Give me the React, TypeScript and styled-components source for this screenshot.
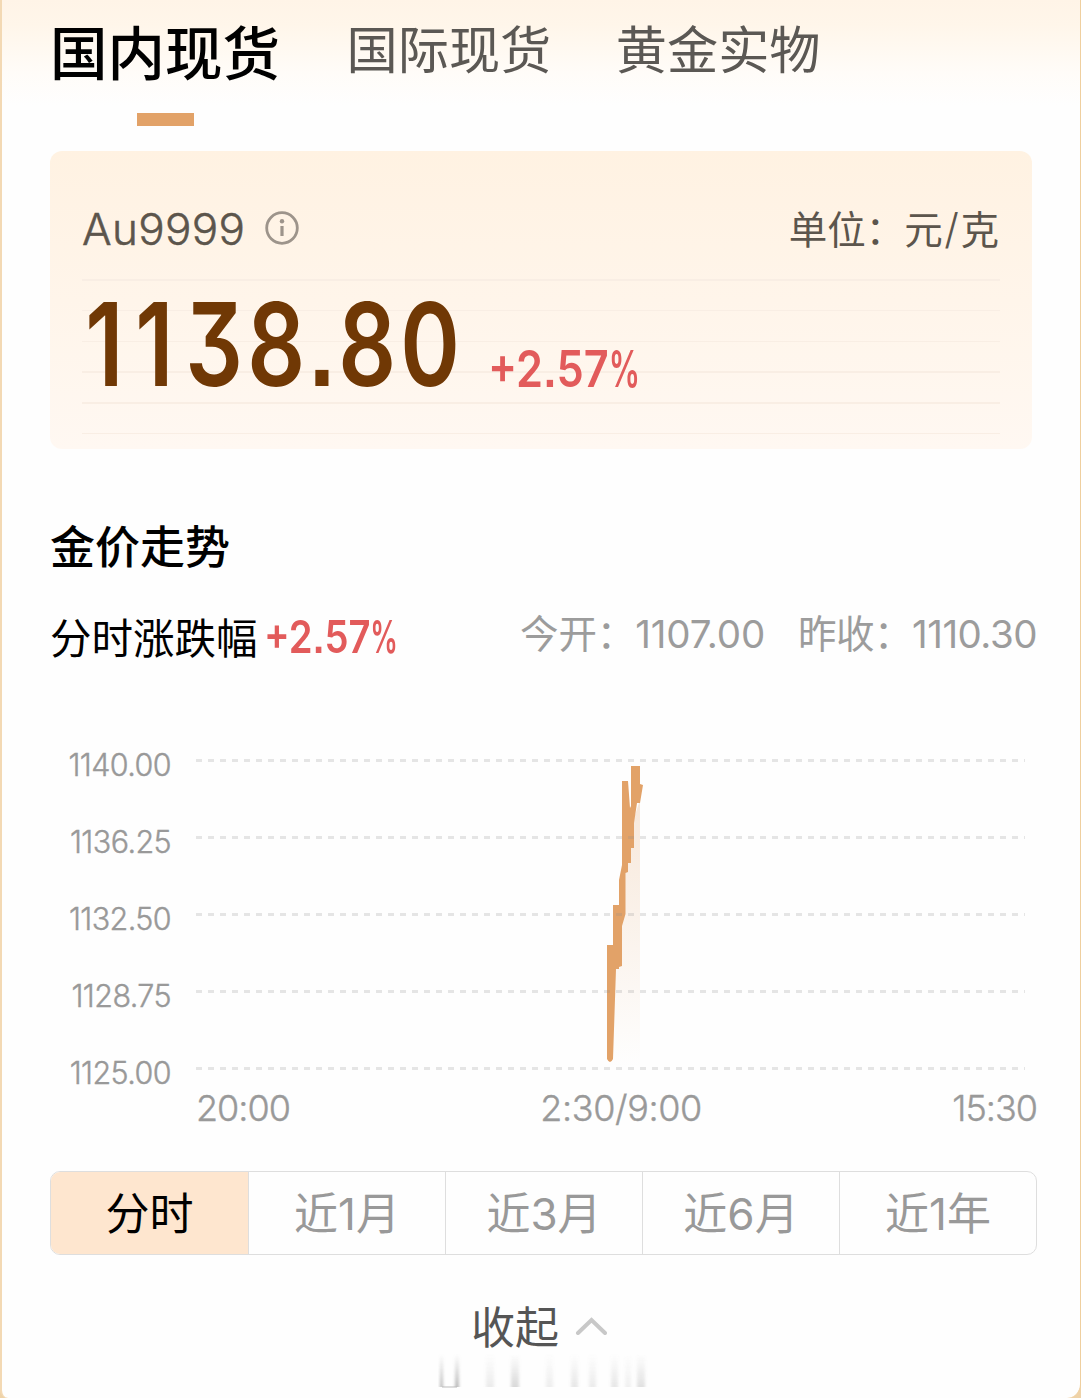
import { useState } from 'react';
import styled, { createGlobalStyle } from 'styled-components';

const tabs = ['国内现货', '国际现货', '黄金实物'];
const ranges = ['分时', '近1月', '近3月', '近6月', '近1年'];
const levels = ['1140.00', '1136.25', '1132.50', '1128.75', '1125.00'];

// faded strip under the collapse button: x, width, opacity
const fades = [
  [2, 3, 0.6], [17, 4, 0.6], [48, 8, 0.16], [73, 8, 0.32], [108, 7, 0.14],
  [133, 7, 0.2], [151, 7, 0.16], [173, 7, 0.2], [187, 6, 0.12], [199, 8, 0.25],
];

export default function App() {
  const [tab, setTab] = useState(0);
  const [range, setRange] = useState(0);

  return (
    <Page lang="zh-CN">
      <GlobalStyle />
      <Tabs>
        {tabs.map((name, i) => (
          <Tab key={name} $active={i === tab} onClick={() => setTab(i)}>
            {name}
          </Tab>
        ))}
      </Tabs>

      <PriceCard>
        <CardHead>
          <Symbol>Au9999</Symbol>
          <InfoIcon />
          <Unit>
            单位：元<Slash>/</Slash>克
          </Unit>
        </CardHead>
        <PriceRow>
          <Price>
            <Ones>11</Ones>38.80
          </Price>
          <Change>
            +2.57<Percent>%</Percent>
          </Change>
        </PriceRow>
      </PriceCard>

      <Title>金价走势</Title>
      <Summary>
        <SummaryLabel>分时涨跌幅</SummaryLabel>
        <SummaryChange>
          +2.57<Percent>%</Percent>
        </SummaryChange>
        <Quotes>
          <Quote>今开：1107.00</Quote>
          <Quote>昨收：1110.30</Quote>
        </Quotes>
      </Summary>

      <Chart>
        <Levels>
          {levels.map((level) => (
            <Level key={level}>{level}</Level>
          ))}
        </Levels>
        <TrendPlot />
      </Chart>
      <Times>
        <Time>20:00</Time>
        <Time $wide>2:30/9:00</Time>
        <Time>15:30</Time>
      </Times>

      <Ranges>
        {ranges.map((name, i) => (
          <Range key={name} $active={i === range} onClick={() => setRange(i)}>
            {name}
          </Range>
        ))}
      </Ranges>

      <Collapse>
        收起
        <svg width="32" height="20" viewBox="0 0 32 20" fill="none">
          <path d="M3 18 L16.500 5 L30 18" stroke="#c8c8c8" strokeWidth="4" strokeLinecap="round" />
        </svg>
      </Collapse>
      <FadeStrip />
    </Page>
  );
}

function InfoIcon() {
  return (
    <svg width="34" height="34" viewBox="0 0 34 34" fill="none">
      <circle cx="17" cy="17" r="15.300" stroke="#9d948b" strokeWidth="2.800" />
      <circle cx="17" cy="10.200" r="2.200" fill="#9d948b" />
      <path d="M17 15v10" stroke="#9d948b" strokeWidth="3.200" />
    </svg>
  );
}

function TrendPlot() {
  return (
    <Plot width="829" height="330" viewBox="196 750 829 330">
      <defs>
        <linearGradient id="area" x1="0" y1="0" x2="0" y2="1">
          <stop offset="0" stopColor="#e2a268" stopOpacity="0.24" />
          <stop offset="1" stopColor="#e2a268" stopOpacity="0" />
        </linearGradient>
      </defs>
      <path d="M610 1058 L615 970 L622 900 L630 830 L640 800 V1068 H610Z" fill="url(#area)" />
      <path
        d="M607 945 H613 V905 H619 V880 L622 865 V781 H628 L630 808 L631 806 V766 H640 V784 L643 785 L640 803 L637 803 L634 823 V848 H631 V863 H628 V872 L625.500 873 V914 L622 926 V966 L619 967 V969 H616 L613 1059 Q610 1065 607 1059Z"
        fill="#e2a268"
      />
      {levels.map((level, i) => (
        <path
          key={level}
          d={`M196 ${760.5 + i * 77}H1025`}
          stroke="#8c8c8c"
          strokeOpacity="0.22"
          strokeWidth="2.800"
          strokeDasharray="6 6"
        />
      ))}
    </Plot>
  );
}

function FadeStrip() {
  return (
    <FadeSvg width="212" height="40" viewBox="0 0 212 40">
      <defs>
        <linearGradient id="fade" x1="0" y1="0" x2="0" y2="1">
          <stop offset="0" stopColor="#999" stopOpacity="0" />
          <stop offset="1" stopColor="#888" />
        </linearGradient>
        <filter id="soften" x="-10%" y="0" width="120%" height="100%">
          <feGaussianBlur stdDeviation="1.800 0" />
        </filter>
      </defs>
      <g filter="url(#soften)">
        {fades.map(([x, width, opacity]) => (
          <rect key={x} x={x} y="3" width={width} height="33" opacity={opacity} fill="url(#fade)" />
        ))}
      </g>
      <path d="M4 36H19" stroke="#bbb" strokeWidth="1" />
    </FadeSvg>
  );
}

// Styled Components
const GlobalStyle = createGlobalStyle`
  body {
    margin: 0;
    background: #efd3a8;
    font-family: Inter, 'Noto Sans CJK SC', sans-serif;
  }
  button {
    font: inherit;
    color: inherit;
    background: none;
    border: 0;
    padding: 0;
  }
  svg {
    display: block;
    flex: none;
  }
`;

const Page = styled.main`
  box-sizing: border-box;
  width: 1081px;
  height: 1398px;
  overflow: hidden;
  border-left: 2px solid #f3d9b4;
  border-right: 1px solid #efcf9f;
  border-radius: 0 0 14px 8px;
  background: linear-gradient(#fff4e7 0, #fff6ea 25px, #fffcf8 72px, #fefefe 105px);
`;

const Tabs = styled.nav`
  display: flex;
  align-items: flex-start;
  height: 151px;
  padding-left: 48px;
`;

const Tab = styled.button<{ $active: boolean }>`
  font-size: ${(p) => (p.$active ? '57.5px' : '51.2px')};
  line-height: ${(p) => (p.$active ? '108px' : '101px')};
  font-weight: ${(p) => (p.$active ? 500 : 400)};
  color: ${(p) => (p.$active ? '#000' : '#5b5854')};
  margin-right: ${(p) => (p.$active ? 66.5 : 64.5)}px;

  &::after {
    content: '';
    display: ${(p) => (p.$active ? 'block' : 'none')};
    width: 57px;
    height: 13px;
    margin: 5px auto 0;
    background: #e2a268;
  }
`;

const PriceCard = styled.section`
  box-sizing: border-box;
  width: 982px;
  height: 298px;
  margin-left: 48px;
  padding: 46px 33px 0 32px;
  border-radius: 12px;
  background: linear-gradient(#fff2e2, #fff5ea 50%, #fff8f2);
`;

const CardHead = styled.div`
  display: flex;
  align-items: center;
  height: 62px;
  color: #5c554c;
`;

const Symbol = styled.span`
  font-size: 44px;
  line-height: 64px;
  font-weight: 300;
  letter-spacing: 0.3px;
  -webkit-text-stroke: 0.5px;
  margin: 2px 20px 0 0;
`;

const Unit = styled.span`
  margin: -3px 0 0 auto;
  font-size: 38.5px;
`;

const Slash = styled.span`
  padding: 0 1.5px;
  font-size: 42px;
  font-weight: 300;
`;

const PriceRow = styled.div`
  display: flex;
  height: 156px;
  margin-top: 20px;
  margin-right: -1px;
  background: repeating-linear-gradient(#f9eee4 0 1.500px, transparent 1.500px 30.800px);
`;

const Price = styled.strong`
  width: 402px;
  padding-left: 4px;
  font-size: 115px;
  line-height: 132px;
  font-weight: 600;
  font-feature-settings: 'cv09', 'ss07';
  letter-spacing: 5.5px;
  color: #703805;
  transform: scaleX(0.786);
  transform-origin: left;
`;

const Ones = styled.span`
  letter-spacing: 15px;
`;

const Change = styled.span`
  font-size: 51px;
  line-height: 179px;
  font-weight: 600;
  font-feature-settings: 'ss07';
  white-space: nowrap;
  color: #e25b5b;
  transform: scaleX(0.85);
  transform-origin: left;
`;

const Percent = styled.span`
  display: inline-block;
  transform: scaleX(0.72);
  transform-origin: left;
`;

const Title = styled.h2`
  margin: 69px 0 0 48px;
  font-size: 45px;
  line-height: 60px;
  font-weight: 500;
  color: #000;
`;

const Summary = styled.div`
  display: flex;
  align-items: center;
  height: 60px;
  margin: 28px 43px 0 48px;
`;

const SummaryLabel = styled.span`
  width: 214px;
  font-size: 41.5px;
`;

const SummaryChange = styled.span`
  width: 140px;
  font-size: 45px;
  font-weight: 600;
  font-feature-settings: 'ss07';
  white-space: nowrap;
  color: #e25b5b;
  transform: scaleX(0.85);
  transform-origin: left;
`;

const Quotes = styled.div`
  display: flex;
  gap: 33px;
  margin: -10px 0 0 auto;
  font-size: 38.5px;
  font-weight: 400;
  white-space: nowrap;
  color: #9c9c9c;
`;

const Quote = styled.span`
  letter-spacing: -0.1px;

  &:last-child {
    letter-spacing: -0.5px;
  }
`;

const Chart = styled.div`
  display: flex;
  align-items: center;
  height: 385px;
  margin-top: 60px;
`;

const Plot = styled.svg`
  margin-top: -8px;
`;

const Levels = styled.div`
  width: 169px;
  margin-right: 25px;
  text-align: right;
`;

const Level = styled.div`
  font-size: 30.5px;
  line-height: 77px;
  font-weight: 300;
  letter-spacing: -0.6px;
  -webkit-text-stroke: 0.4px;
  color: #999;
`;

const Times = styled.div`
  display: flex;
  justify-content: space-between;
  height: 60px;
  margin: -33px 43px 0 194px;
  font-size: 36px;
  line-height: 60px;
  font-weight: 300;
  -webkit-text-stroke: 0.4px;
  color: #999;
`;

const Time = styled.span<{ $wide?: boolean }>`
  letter-spacing: ${(p) => (p.$wide ? '-0.4px' : '-1px')};
`;

const Ranges = styled.div`
  box-sizing: border-box;
  display: flex;
  width: 987px;
  height: 84px;
  margin: 33px 0 0 48px;
  overflow: hidden;
  border: 1px solid #dedede;
  border-radius: 10px;
`;

const Range = styled.button<{ $active: boolean }>`
  flex: 1;
  padding-bottom: 5px;
  font-size: 44px;
  color: ${(p) => (p.$active ? '#000' : '#999')};
  background: ${(p) => (p.$active ? '#fee6cf' : 'transparent')};

  &:first-child {
    flex: 0 0 198px;
  }
  &:not(:last-child) {
    border-right: 1px solid #dedede;
  }
`;

const Collapse = styled.button`
  display: flex;
  align-items: center;
  gap: 16px;
  height: 60px;
  margin: 40px 0 0 469px;
  font-size: 44px;
  color: #555;
`;

const FadeSvg = styled.svg`
  margin: -4px 0 0 436px;
`;
